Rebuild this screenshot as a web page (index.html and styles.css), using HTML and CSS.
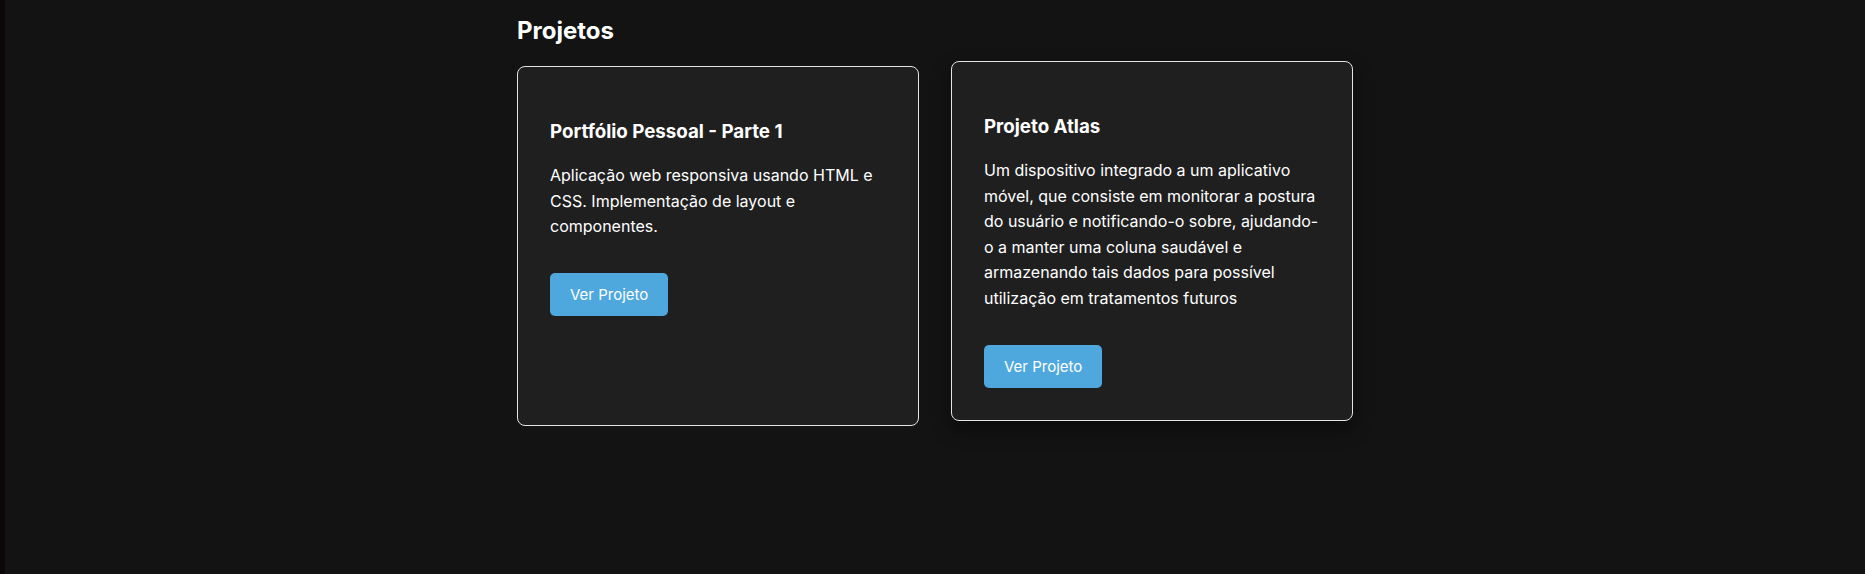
FILE: index.html
```html
<!DOCTYPE html>
<html lang="pt-BR">
<head>
<meta charset="utf-8">
<title>Projetos</title>
<link rel="stylesheet" href="styles.css">
</head>
<body>
<div class="edge"></div>
<main class="main">
  <section class="projects">
    <h2 class="section-title">Projetos</h2>
    <div class="grid">
      <article class="card">
        <h3 class="card-title">Portfólio Pessoal - Parte 1</h3>
        <p class="card-text">Aplicação web responsiva usando HTML e CSS. Implementação de layout e componentes.</p>
        <a class="btn" href="#">Ver Projeto</a>
      </article>
      <article class="card card-hover">
        <h3 class="card-title">Projeto Atlas</h3>
        <p class="card-text">Um dispositivo integrado a um aplicativo móvel, que consiste em monitorar a postura do usuário e notificando-o sobre, ajudando-o a manter uma coluna saudável e armazenando tais dados para possível utilização em tratamentos futuros</p>
        <a class="btn" href="#">Ver Projeto</a>
      </article>
    </div>
  </section>
</main>
</body>
</html>
```

FILE: styles.css
```css
html, body {
  margin: 0;
  padding: 0;
  height: 100%;
}
body {
  background: #131313;
  color: #ffffff;
  font-family: Inter, "Noto Sans", sans-serif;
  display: flex;
}
.edge {
  width: 5px;
  flex: 0 0 5px;
  background: #0b070a;
}
.main {
  flex: 1;
}
.projects {
  max-width: 900px;
  margin: 0 auto;
  padding: 0 32px;
  box-sizing: border-box;
}
.section-title {
  font-size: 24px;
  font-weight: 700;
  line-height: 29px;
  margin: 16px 0 21px;
  color: #ffffff;
}
.grid {
  display: grid;
  grid-template-columns: 1fr 1fr;
  gap: 32px;
}
.card {
  background: #1f1f1f;
  border: 1px solid #e4e4e4;
  border-radius: 8px;
  padding: 32px;
  display: flex;
  flex-direction: column;
  align-items: flex-start;
}
.card-hover {
  transform: translateY(-5px);
  box-shadow: 0 8px 20px rgba(0, 0, 0, 0.45);
}
.card-title {
  font-size: 18.72px;
  font-weight: 700;
  line-height: 22.5px;
  margin: 21.5px 0 20px;
  color: #ffffff;
}
.card-text {
  font-size: 16px;
  line-height: 25.6px;
  margin: 0 0 33px;
  color: #ffffff;
}
.btn {
  display: inline-block;
  background: #4ea8de;
  color: #ffffff;
  text-decoration: none;
  font-size: 15px;
  line-height: 19px;
  padding: 12px 20px;
  border-radius: 5px;
}
```
